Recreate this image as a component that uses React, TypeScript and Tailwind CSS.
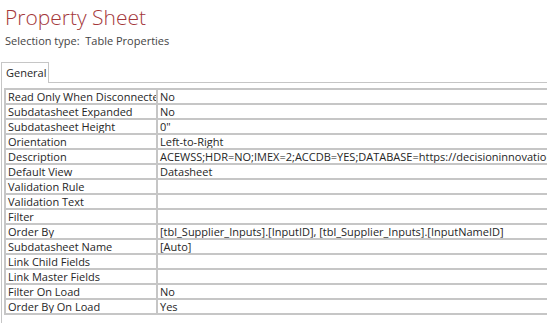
import React from 'react';

interface PropRow {
  label: string;
  value: string;
}

const rows: PropRow[] = [
  { label: 'Read Only When Disconnected', value: 'No' },
  { label: 'Subdatasheet Expanded', value: 'No' },
  { label: 'Subdatasheet Height', value: '0"' },
  { label: 'Orientation', value: 'Left-to-Right' },
  {
    label: 'Description',
    value: 'ACEWSS;HDR=NO;IMEX=2;ACCDB=YES;DATABASE=https://decisioninnovations.sharepoint.com/sites/suppliers',
  },
  { label: 'Default View', value: 'Datasheet' },
  { label: 'Validation Rule', value: '' },
  { label: 'Validation Text', value: '' },
  { label: 'Filter', value: '' },
  {
    label: 'Order By',
    value: '[tbl_Supplier_Inputs].[InputID], [tbl_Supplier_Inputs].[InputNameID]',
  },
  { label: 'Subdatasheet Name', value: '[Auto]' },
  { label: 'Link Child Fields', value: '' },
  { label: 'Link Master Fields', value: '' },
  { label: 'Filter On Load', value: 'No' },
  { label: 'Order By On Load', value: 'Yes' },
];

export default function App() {
  return (
    <div
      className="w-[547px] h-[323px] overflow-hidden bg-white text-[#262626]"
      style={{ fontFamily: '"Open Sans", "Noto Sans", sans-serif' }}
    >
      <div className="pl-[5px] pt-[3px]">
        <h1 className="text-[21px] leading-[28px] font-light text-[#a4373a]">
          Property Sheet
        </h1>
        <p className="text-[11px] leading-[16px] mt-[2px] text-[#444]">
          Selection type:&nbsp; Table Properties
        </p>
      </div>

      <div className="mt-[13px] flex">
        <div className="ml-[1px] w-[48px] h-[21px] border border-b-0 border-[#c6c6c6] bg-white px-[4px] text-[11px] leading-[19px] text-[#262626]">
          General
        </div>
        <div className="flex-1 border-b border-[#c6c6c6]" />
      </div>

      <div className="ml-[1px] border-l border-[#c6c6c6] pt-[5px] pl-[2px] h-[240px]">
        <div className="border-t-2 border-l-2 border-[#c6c6c6]">
          {rows.map((row) => (
            <div
              key={row.label}
              className="flex h-[15px] border-b-2 border-[#c6c6c6] text-[11px] leading-[13px] whitespace-nowrap"
            >
              <div className="w-[152px] shrink-0 overflow-hidden pl-[2px] border-r-2 border-[#c6c6c6]">
                {row.label}
              </div>
              <div className="flex-1 overflow-hidden pl-[2px]">{row.value}</div>
            </div>
          ))}
        </div>
      </div>
    </div>
  );
}
